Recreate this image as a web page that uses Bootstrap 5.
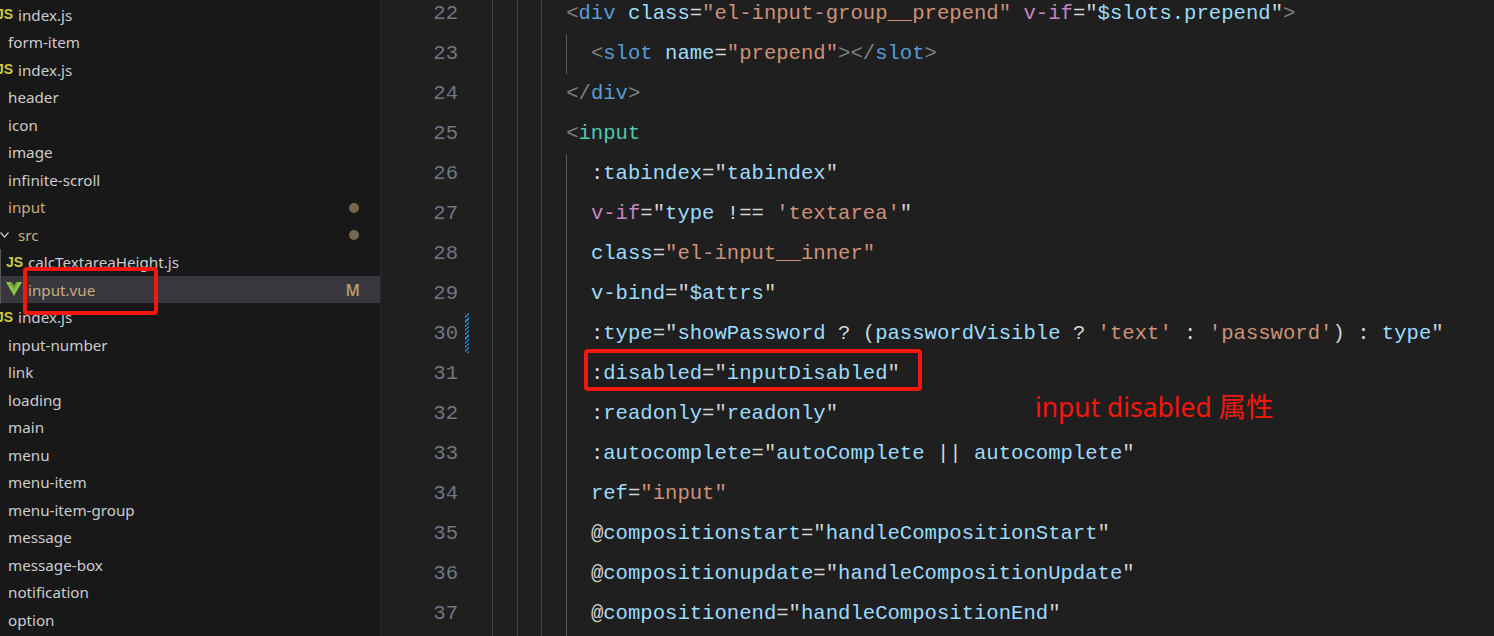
<!DOCTYPE html>
<html lang="en"><head><meta charset="utf-8"><title>input.vue</title>
<link href="https://cdn.jsdelivr.net/npm/bootstrap@5.3.0/dist/css/bootstrap.min.css" rel="stylesheet">
<style>
html,body{margin:0;background:#1f1f1f;overflow:hidden}
.shot{width:1494px;height:636px;overflow:hidden}
.side{width:381px;height:636px;flex:none;background:#181818;border-right:1px solid #2b2b2b;padding-top:1.5px;font-family:"Noto Sans",sans-serif;font-size:15.2px;color:#cccccc;overflow:hidden}
.tr{height:27.5px;line-height:27.5px;padding-left:8px;white-space:nowrap}
.tr.d1{padding-left:18px}
.tr.d2{padding-left:28px}
.tr.git{color:#c9ad7c}
.tr.guide{box-shadow:inset 1px 0 0 #585858}
.tr.sel{background:linear-gradient(#37373d calc(100% - 1px),#181818 0);box-shadow:inset 1px 0 0 #585858,0 -1px 0 #37373d}
.ico{flex:none;width:18px;font-family:"Liberation Sans",sans-serif;font-weight:700;font-size:14px;color:#cbcb41;line-height:1;position:relative;top:-1px}
.d1 .ico{margin-left:-22px;margin-right:4px}
.d2 .ico{margin-left:-22px;margin-right:4px}
.dot{width:10px;height:10px;border-radius:50%;background:#75664e;margin-right:21px}
.gm{margin-right:20px;font-weight:600;color:#b9996b;font-size:15.5px}
.chev{flex:none;margin-left:-18px;margin-right:8px}
.vue{flex:none;margin-left:-22px;margin-right:6px;position:relative;top:-1px}
.ed{margin-top:-6px;font-family:"Liberation Mono",monospace;font-size:20.6px;height:644px;overflow:hidden}
.ln{height:40px;line-height:40px;white-space:pre}
.num{flex:none;width:77px;text-align:right;color:#6e7681}
.gut{flex:none;width:34px}
.gb{display:block;width:4px;height:40px;margin:-1px 0 0 7px;background:repeating-linear-gradient(-45deg,#1b81c8 0 1.5px,#1f1f1f 1.5px 3px)}
.ig{flex:none;width:24.72px;height:40px;border-left:1px solid #404040}
.ig.act{border-left-color:#5a5a5a}
.c-p{color:#808080}.c-t{color:#569cd6}.c-i{color:#4ec9b0}.c-a{color:#9cdcfe}.c-s{color:#ce9178}.c-o{color:#d4d4d4}.c-v{color:#c586c0}
.mk{position:absolute;border:4px solid #f5160e;border-radius:4px}
.mk-a{left:23px;top:267px;width:135px;height:48px}
.mk-b{left:584px;top:349px;width:338px;height:42px}
.note{position:absolute;left:1035px;top:388px;color:#f5160e;font-family:"Noto Sans","Noto Sans CJK SC",sans-serif;font-size:26.4px;line-height:38px;white-space:nowrap}
.note-cjk{font-size:27.5px}
</style></head>
<body>
<div class="shot d-flex position-relative">
<div class="side">
<div class="tr d1 d-flex align-items-center"><span class="ico">JS</span><span>index.js</span></div>
<div class="tr">form-item</div>
<div class="tr d1 d-flex align-items-center"><span class="ico">JS</span><span>index.js</span></div>
<div class="tr">header</div>
<div class="tr">icon</div>
<div class="tr">image</div>
<div class="tr">infinite-scroll</div>
<div class="tr git d-flex align-items-center justify-content-between"><span>input</span><span class="dot"></span></div>
<div class="tr git d1 d-flex align-items-center justify-content-between"><span class="d-flex align-items-center"><svg class="chev" width="10" height="8" viewBox="0 0 10 8"><path d="M.5 1.5 4.5 6l4-4.5" fill="none" stroke="#c8c8c8" stroke-width="1.2"/></svg><span>src</span></span><span class="dot"></span></div>
<div class="tr d2 guide d-flex align-items-center"><span class="ico">JS</span><span>calcTextareaHeight.js</span></div>
<div class="tr d2 sel git d-flex align-items-center justify-content-between"><span class="d-flex align-items-center"><svg class="vue" width="16" height="14" viewBox="0 0 16 14"><path d="M0 0h16L8 14z" fill="#8dc149"/><path d="M3.6 0h8.8L8 7.6z" fill="#6d9a3c"/><path d="M5.8 0h4.4L8 3.8z" fill="#37373d"/></svg><span>input.vue</span></span><span class="gm">M</span></div>
<div class="tr d1 d-flex align-items-center"><span class="ico">JS</span><span>index.js</span></div>
<div class="tr">input-number</div>
<div class="tr">link</div>
<div class="tr">loading</div>
<div class="tr">main</div>
<div class="tr">menu</div>
<div class="tr">menu-item</div>
<div class="tr">menu-item-group</div>
<div class="tr">message</div>
<div class="tr">message-box</div>
<div class="tr">notification</div>
<div class="tr">option</div>
</div>
<div class="ed flex-grow-1">
<div class="ln d-flex"><span class="num">22</span><span class="gut"></span><i class="ig"></i><i class="ig"></i><i class="ig"></i><span><span class="c-p">&lt;</span><span class="c-t">div</span> <span class="c-a">class</span><span class="c-o">=</span><span class="c-s">"el-input-group__prepend"</span> <span class="c-v">v-if</span><span class="c-o">="</span><span class="c-a">$slots.prepend</span><span class="c-o">"</span><span class="c-p">&gt;</span></span></div>
<div class="ln d-flex"><span class="num">23</span><span class="gut"></span><i class="ig"></i><i class="ig"></i><i class="ig"></i><i class="ig act"></i><span><span class="c-p">&lt;</span><span class="c-t">slot</span> <span class="c-a">name</span><span class="c-o">=</span><span class="c-s">"prepend"</span><span class="c-p">&gt;&lt;/</span><span class="c-t">slot</span><span class="c-p">&gt;</span></span></div>
<div class="ln d-flex"><span class="num">24</span><span class="gut"></span><i class="ig"></i><i class="ig"></i><i class="ig"></i><span><span class="c-p">&lt;/</span><span class="c-t">div</span><span class="c-p">&gt;</span></span></div>
<div class="ln d-flex"><span class="num">25</span><span class="gut"></span><i class="ig"></i><i class="ig"></i><i class="ig"></i><span><span class="c-p">&lt;</span><span class="c-i">input</span></span></div>
<div class="ln d-flex"><span class="num">26</span><span class="gut"></span><i class="ig"></i><i class="ig"></i><i class="ig"></i><i class="ig act"></i><span><span class="c-o">:</span><span class="c-a">tabindex</span><span class="c-o">="</span><span class="c-a">tabindex</span><span class="c-o">"</span></span></div>
<div class="ln d-flex"><span class="num">27</span><span class="gut"></span><i class="ig"></i><i class="ig"></i><i class="ig"></i><i class="ig act"></i><span><span class="c-v">v-if</span><span class="c-o">="</span><span class="c-a">type</span> <span class="c-o">!==</span> <span class="c-s">'textarea'</span><span class="c-o">"</span></span></div>
<div class="ln d-flex"><span class="num">28</span><span class="gut"></span><i class="ig"></i><i class="ig"></i><i class="ig"></i><i class="ig act"></i><span><span class="c-a">class</span><span class="c-o">=</span><span class="c-s">"el-input__inner"</span></span></div>
<div class="ln d-flex"><span class="num">29</span><span class="gut"></span><i class="ig"></i><i class="ig"></i><i class="ig"></i><i class="ig act"></i><span><span class="c-a">v-bind</span><span class="c-o">="</span><span class="c-a">$attrs</span><span class="c-o">"</span></span></div>
<div class="ln d-flex"><span class="num">30</span><span class="gut"><b class="gb"></b></span><i class="ig"></i><i class="ig"></i><i class="ig"></i><i class="ig act"></i><span><span class="c-o">:</span><span class="c-a">type</span><span class="c-o">="</span><span class="c-a">showPassword</span> <span class="c-o">?</span> <span class="c-o">(</span><span class="c-a">passwordVisible</span> <span class="c-o">?</span> <span class="c-s">'text'</span> <span class="c-o">:</span> <span class="c-s">'password'</span><span class="c-o">)</span> <span class="c-o">:</span> <span class="c-a">type</span><span class="c-o">"</span></span></div>
<div class="ln d-flex"><span class="num">31</span><span class="gut"></span><i class="ig"></i><i class="ig"></i><i class="ig"></i><i class="ig act"></i><span><span class="c-o">:</span><span class="c-a">disabled</span><span class="c-o">="</span><span class="c-a">inputDisabled</span><span class="c-o">"</span></span></div>
<div class="ln d-flex"><span class="num">32</span><span class="gut"></span><i class="ig"></i><i class="ig"></i><i class="ig"></i><i class="ig act"></i><span><span class="c-o">:</span><span class="c-a">readonly</span><span class="c-o">="</span><span class="c-a">readonly</span><span class="c-o">"</span></span></div>
<div class="ln d-flex"><span class="num">33</span><span class="gut"></span><i class="ig"></i><i class="ig"></i><i class="ig"></i><i class="ig act"></i><span><span class="c-o">:</span><span class="c-a">autocomplete</span><span class="c-o">="</span><span class="c-a">autoComplete</span> <span class="c-o">||</span> <span class="c-a">autocomplete</span><span class="c-o">"</span></span></div>
<div class="ln d-flex"><span class="num">34</span><span class="gut"></span><i class="ig"></i><i class="ig"></i><i class="ig"></i><i class="ig act"></i><span><span class="c-a">ref</span><span class="c-o">=</span><span class="c-s">"input"</span></span></div>
<div class="ln d-flex"><span class="num">35</span><span class="gut"></span><i class="ig"></i><i class="ig"></i><i class="ig"></i><i class="ig act"></i><span><span class="c-o">@</span><span class="c-a">compositionstart</span><span class="c-o">="</span><span class="c-a">handleCompositionStart</span><span class="c-o">"</span></span></div>
<div class="ln d-flex"><span class="num">36</span><span class="gut"></span><i class="ig"></i><i class="ig"></i><i class="ig"></i><i class="ig act"></i><span><span class="c-o">@</span><span class="c-a">compositionupdate</span><span class="c-o">="</span><span class="c-a">handleCompositionUpdate</span><span class="c-o">"</span></span></div>
<div class="ln d-flex"><span class="num">37</span><span class="gut"></span><i class="ig"></i><i class="ig"></i><i class="ig"></i><i class="ig act"></i><span><span class="c-o">@</span><span class="c-a">compositionend</span><span class="c-o">="</span><span class="c-a">handleCompositionEnd</span><span class="c-o">"</span></span></div>
<div class="ln d-flex"><span class="num"></span><span class="gut"></span><i class="ig"></i><i class="ig"></i><i class="ig"></i><i class="ig act"></i></div>
</div>
<div class="mk mk-a"></div>
<div class="mk mk-b"></div>
<div class="note">input disabled <span class="note-cjk">属性</span></div>
</div>
<script src="https://cdn.jsdelivr.net/npm/bootstrap@5.3.0/dist/js/bootstrap.bundle.min.js"></script>
</body></html>
